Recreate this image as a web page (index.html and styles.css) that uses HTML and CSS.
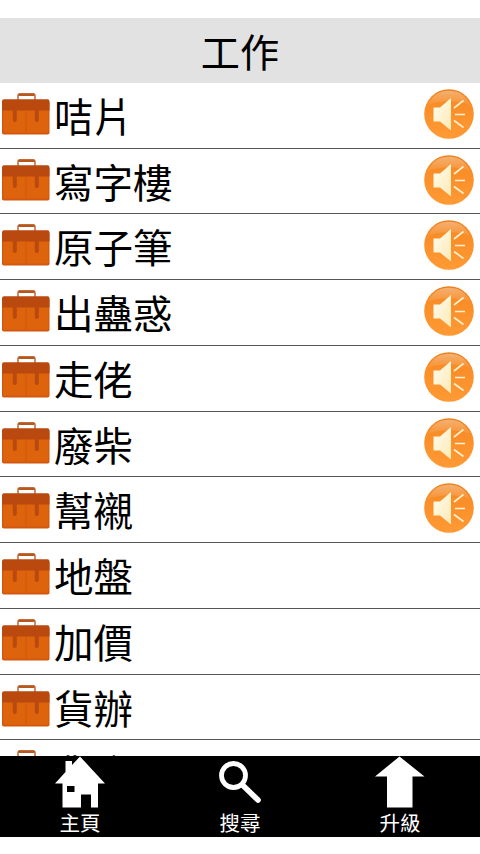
FILE: index.html
```html
<!DOCTYPE html>
<html lang="zh-Hant">
<head>
<meta charset="utf-8">
<title>工作</title>
<link rel="stylesheet" href="styles.css">
</head>
<body>
<svg class="defs" aria-hidden="true">
  <defs>
    <linearGradient id="orb" x1="0" y1="0" x2="0" y2="1">
      <stop offset="0" stop-color="#ed7f1a"/>
      <stop offset=".3" stop-color="#f98d27"/>
      <stop offset="1" stop-color="#ff9a35"/>
    </linearGradient>
    <linearGradient id="shine" x1="0" y1="0" x2="0" y2="1">
      <stop offset="0" stop-color="#fff" stop-opacity=".38"/>
      <stop offset="1" stop-color="#fff" stop-opacity=".05"/>
    </linearGradient>
    <linearGradient id="cone" x1="0" y1="0" x2="1" y2="1">
      <stop offset="0" stop-color="#fffdf0"/>
      <stop offset="1" stop-color="#fde9b4"/>
    </linearGradient>
  </defs>
  <symbol id="case" viewBox="0 0 50 42">
    <path d="M18 7V2.5Q18 1.2 19.5 1.2H33.5Q35 1.2 35 2.5V7" fill="none" stroke="#bd6735" stroke-width="1.5"/>
    <path d="M19.5 1.6H33.5" stroke="#b8561c" stroke-width="2.8" stroke-linecap="round"/>
    <rect x="2" y="8" width="47.5" height="33.5" rx="1.8" fill="#d4560f"/>
    <rect x="3.3" y="17" width="45" height="22.7" fill="#dd630d"/>
    <path d="M26 18V40" stroke="#d2570b" stroke-width="1"/>
    <path d="M2 17.5V8.5Q2 6.3 4 6.3H47.5Q49.5 6.3 49.5 8.5V17.5Z" fill="#b9490f"/>
    <path d="M14.8 17V27M36.8 17V27" stroke="#b9490f" stroke-width="4" stroke-linecap="round"/>
  </symbol>
  <symbol id="sound" viewBox="0 0 50 50">
    <circle cx="25" cy="25" r="24.8" fill="url(#orb)"/>
    <path d="M4 16C8 6 16 1.8 25 1.8S42 6 46 16C34 11 16 11 4 16Z" fill="url(#shine)"/>
    <path d="M9.5 18.5H16L27 9V41.5L16 32.5H9.5Z" fill="url(#cone)"/>
    <path d="M30 19L39.5 11.5M31 25.5H41M30 31.5L39.5 38.5" stroke="#fff0cf" stroke-width="1.6"/>
  </symbol>
</svg>
<header class="title">工作</header>
<ul class="list">
  <li class="row"><svg class="case"><use href="#case"/></svg><span class="word">咭片</span><svg class="sound"><use href="#sound"/></svg></li>
  <li class="row"><svg class="case"><use href="#case"/></svg><span class="word">寫字樓</span><svg class="sound"><use href="#sound"/></svg></li>
  <li class="row"><svg class="case"><use href="#case"/></svg><span class="word">原子筆</span><svg class="sound"><use href="#sound"/></svg></li>
  <li class="row"><svg class="case"><use href="#case"/></svg><span class="word">出蠱惑</span><svg class="sound"><use href="#sound"/></svg></li>
  <li class="row"><svg class="case"><use href="#case"/></svg><span class="word">走佬</span><svg class="sound"><use href="#sound"/></svg></li>
  <li class="row"><svg class="case"><use href="#case"/></svg><span class="word">廢柴</span><svg class="sound"><use href="#sound"/></svg></li>
  <li class="row"><svg class="case"><use href="#case"/></svg><span class="word">幫襯</span><svg class="sound"><use href="#sound"/></svg></li>
  <li class="row"><svg class="case"><use href="#case"/></svg><span class="word">地盤</span></li>
  <li class="row"><svg class="case"><use href="#case"/></svg><span class="word">加價</span></li>
  <li class="row"><svg class="case"><use href="#case"/></svg><span class="word">貨辦</span></li>
  <li class="row"><svg class="case"><use href="#case"/></svg><span class="word">貨倉</span></li>
</ul>
<nav class="tabs">
  <a class="tab"><svg class="glyph" viewBox="0 0 52 52"><path fill="#fff" fill-rule="evenodd" d="M26 0.5L51 27.5H44V51.5H37V38.5H27V51.5H8.5V27.5H1L11.5 16V5H18V9ZM13 30V36H20.5V30Z"/></svg><span>主頁</span></a>
  <a class="tab"><svg class="glyph" viewBox="0 0 52 52"><circle cx="19.5" cy="19.5" r="12" fill="none" stroke="#fff" stroke-width="4.8"/><path d="M28.5 29L44 44" stroke="#fff" stroke-width="5.6" stroke-linecap="round"/></svg><span>搜尋</span></a>
  <a class="tab"><svg class="glyph" viewBox="0 0 52 52"><path fill="#fff" d="M25.5 0.5L50.5 20.5H38.5V51.5H13V20.5H1Z"/></svg><span>升級</span></a>
</nav>
</body>
</html>
```
FILE: styles.css
```css
* { box-sizing: border-box; }
body {
  margin: 0;
  height: 854px;
  padding: 18px 0 17px;
  display: flex;
  flex-direction: column;
  overflow: hidden;
  background: #fff;
  color: #000;
  font-family: "Noto Sans CJK TC", sans-serif;
}
.defs { position: absolute; width: 0; height: 0; }
.title {
  flex: none;
  height: 64.8px;
  background: #e2e2e2;
  font-size: 39.2px;
  line-height: 64px;
  text-align: center;
}
.list {
  flex: 1;
  min-height: 0;
  margin: 0;
  padding: 0;
  overflow: hidden;
  list-style: none;
}
.row {
  display: flex;
  align-items: flex-start;
  height: 65.75px;
  border-bottom: 1px solid #555;
}
.case { flex: none; width: 50px; height: 42px; margin-top: 10px; }
.word {
  flex: 1;
  padding-left: 4px;
  font-size: 39.5px;
  line-height: 64px;
}
.sound { flex: none; width: 50px; height: 50px; margin: 6px 6px 0 0; }
.tabs { flex: none; display: flex; height: 81px; background: #000; color: #fff; }
.tab { flex: 1; display: flex; flex-direction: column; align-items: center; }
.glyph { display: block; width: 52px; height: 52px; }
.tab span { font-size: 20.5px; line-height: 29px; }
```
